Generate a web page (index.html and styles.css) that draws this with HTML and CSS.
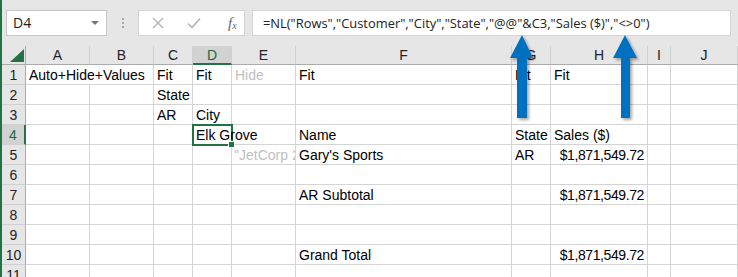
FILE: index.html
```html
<!DOCTYPE html>
<html lang="en">
<head>
  <meta charset="UTF-8">
  <title>NL formula</title>
  <link rel="stylesheet" href="styles.css">
</head>
<body>
  <div class="app">
    <div class="formula-bar">
      <div class="name-box">D4<span class="caret"></span></div>
      <div class="grip"><i></i><i></i><i></i></div>
      <div class="fx-buttons">
        <svg class="btn-icon" width="12" height="12" viewBox="0 0 12 12"><path d="M1 1 L11 11 M11 1 L1 11" stroke="#b4b4b4" stroke-width="1.4" fill="none"/></svg>
        <svg class="btn-icon" width="14" height="12" viewBox="0 0 14 12"><path d="M1 6.5 L5 10.5 L13 1.5" stroke="#b4b4b4" stroke-width="1.6" fill="none"/></svg>
        <span class="fx">f<sub>x</sub></span>
      </div>
      <div class="formula">=NL("Rows","Customer","City","State","@@"&amp;C3,"Sales ($)","&lt;&gt;0")</div>
    </div>

    <div class="sheet">
      <!-- header row -->
      <div class="corner"><span class="tri"></span></div>
      <div class="col-head">A</div>
      <div class="col-head">B</div>
      <div class="col-head">C</div>
      <div class="col-head active">D</div>
      <div class="col-head">E</div>
      <div class="col-head">F</div>
      <div class="col-head">G</div>
      <div class="col-head">H</div>
      <div class="col-head">I</div>
      <div class="col-head">J</div>

      <!-- row 1 -->
      <div class="row-head">1</div>
      <div class="cell no-line"><span class="spill">Auto+Hide+Values</span></div>
      <div class="cell"></div>
      <div class="cell">Fit</div>
      <div class="cell">Fit</div>
      <div class="cell muted">Hide</div>
      <div class="cell">Fit</div>
      <div class="cell">Fit</div>
      <div class="cell">Fit</div>
      <div class="cell"></div>
      <div class="cell"></div>

      <!-- row 2 -->
      <div class="row-head">2</div>
      <div class="cell"></div>
      <div class="cell"></div>
      <div class="cell">State</div>
      <div class="cell"></div>
      <div class="cell"></div>
      <div class="cell"></div>
      <div class="cell"></div>
      <div class="cell"></div>
      <div class="cell"></div>
      <div class="cell"></div>

      <!-- row 3 -->
      <div class="row-head">3</div>
      <div class="cell"></div>
      <div class="cell"></div>
      <div class="cell">AR</div>
      <div class="cell">City</div>
      <div class="cell"></div>
      <div class="cell"></div>
      <div class="cell"></div>
      <div class="cell"></div>
      <div class="cell"></div>
      <div class="cell"></div>

      <!-- row 4 -->
      <div class="row-head active">4</div>
      <div class="cell"></div>
      <div class="cell"></div>
      <div class="cell"></div>
      <div class="cell selected"><span class="spill">Elk Grove</span><span class="handle"></span></div>
      <div class="cell"></div>
      <div class="cell">Name</div>
      <div class="cell">State</div>
      <div class="cell">Sales ($)</div>
      <div class="cell"></div>
      <div class="cell"></div>

      <!-- row 5 -->
      <div class="row-head">5</div>
      <div class="cell"></div>
      <div class="cell"></div>
      <div class="cell"></div>
      <div class="cell"></div>
      <div class="cell muted clip">"JetCorp 2</div>
      <div class="cell">Gary's Sports</div>
      <div class="cell">AR</div>
      <div class="cell num">$1,871,549.72</div>
      <div class="cell"></div>
      <div class="cell"></div>

      <!-- row 6 -->
      <div class="row-head">6</div>
      <div class="cell"></div><div class="cell"></div><div class="cell"></div><div class="cell"></div><div class="cell"></div>
      <div class="cell"></div><div class="cell"></div><div class="cell"></div><div class="cell"></div><div class="cell"></div>

      <!-- row 7 -->
      <div class="row-head">7</div>
      <div class="cell"></div>
      <div class="cell"></div>
      <div class="cell"></div>
      <div class="cell"></div>
      <div class="cell"></div>
      <div class="cell">AR Subtotal</div>
      <div class="cell"></div>
      <div class="cell num">$1,871,549.72</div>
      <div class="cell"></div>
      <div class="cell"></div>

      <!-- row 8 -->
      <div class="row-head">8</div>
      <div class="cell"></div><div class="cell"></div><div class="cell"></div><div class="cell"></div><div class="cell"></div>
      <div class="cell"></div><div class="cell"></div><div class="cell"></div><div class="cell"></div><div class="cell"></div>

      <!-- row 9 -->
      <div class="row-head">9</div>
      <div class="cell"></div><div class="cell"></div><div class="cell"></div><div class="cell"></div><div class="cell"></div>
      <div class="cell"></div><div class="cell"></div><div class="cell"></div><div class="cell"></div><div class="cell"></div>

      <!-- row 10 -->
      <div class="row-head">10</div>
      <div class="cell"></div>
      <div class="cell"></div>
      <div class="cell"></div>
      <div class="cell"></div>
      <div class="cell"></div>
      <div class="cell">Grand Total</div>
      <div class="cell"></div>
      <div class="cell num">$1,871,549.72</div>
      <div class="cell"></div>
      <div class="cell"></div>

      <!-- row 11 -->
      <div class="row-head">11</div>
      <div class="cell"></div><div class="cell"></div><div class="cell"></div><div class="cell"></div><div class="cell"></div>
      <div class="cell"></div><div class="cell"></div><div class="cell"></div><div class="cell"></div><div class="cell"></div>
    </div>

    <!-- callout arrows pointing at the formula -->
    <svg class="arrows" width="738" height="277" viewBox="0 0 738 277">
      <defs>
        <filter id="shadow" x="-50%" y="-20%" width="200%" height="150%">
          <feDropShadow dx="2" dy="2" stdDeviation="1.5" flood-color="#000" flood-opacity="0.35"/>
        </filter>
      </defs>
      <g fill="#0070c0" filter="url(#shadow)">
        <polygon points="522,35 533,58 527,58 527,118 517,118 517,58 510,58"/>
        <polygon points="625,35 637,58 630,58 630,118 621,118 621,58 613,58"/>
      </g>
    </svg>
  </div>
</body>
</html>
```

FILE: styles.css
```css
body {
  margin: 0;
  padding: 0;
  background-color: #ffffff;
  font-family: "Liberation Sans", Arial, sans-serif;
}

.app {
  position: relative;
  width: 736px;
  height: 277px;
  overflow: hidden;
  border-left: 2px solid #217346;
}

/* formula bar */
.formula-bar {
  height: 46px;
  background-color: #e6e6e6;
  display: flex;
  align-items: flex-start;
  padding-top: 10px;
  box-sizing: border-box;
}

.name-box {
  position: relative;
  margin-left: 4px;
  width: 101px;
  height: 26px;
  box-sizing: border-box;
  background-color: white;
  border: 1px solid #c6c6c6;
  font-family: "Open Sans", sans-serif;
  font-size: 14px;
  line-height: 24px;
  padding-left: 6px;
  color: #222;
}

.caret {
  position: absolute;
  right: 7px;
  top: 10px;
  border-left: 4px solid transparent;
  border-right: 4px solid transparent;
  border-top: 4px solid #777;
}

.grip {
  width: 31px;
  height: 26px;
  display: flex;
  flex-direction: column;
  align-items: center;
  justify-content: center;
  gap: 2px;
}

.grip i {
  display: block;
  width: 2px;
  height: 2px;
  background-color: #a8a8a8;
}

.fx-buttons {
  width: 107px;
  height: 26px;
  box-sizing: border-box;
  background-color: white;
  border: 1px solid #d4d4d4;
  display: flex;
  align-items: center;
  padding-left: 13px;
  gap: 23px;
}

.fx {
  font-family: "Liberation Serif", serif;
  font-style: italic;
  font-size: 15px;
  color: #666;
  margin-left: 4px;
}

.fx sub {
  font-size: 10px;
  vertical-align: 0;
  position: relative;
  top: 1px;
}

.formula {
  margin-left: 7px;
  width: 479px;
  height: 26px;
  box-sizing: border-box;
  background-color: white;
  border: 1px solid #d4d4d4;
  font-family: "Open Sans", sans-serif;
  font-size: 12.9px;
  line-height: 24px;
  padding-left: 10px;
  color: #222;
  white-space: nowrap;
}

/* grid */
.sheet {
  display: grid;
  grid-template-columns: 24px 64px 64px 39px 39px 64px 216px 39px 97px 23px 67px;
  grid-template-rows: 19px repeat(11, 20px);
  font-size: 14px;
  color: #000;
}

.corner,
.col-head,
.row-head {
  background-color: #e6e6e6;
  box-sizing: border-box;
  color: #222;
}

.corner {
  position: relative;
  border-right: 1px solid #ababab;
  border-bottom: 1px solid #ababab;
}

.corner .tri {
  position: absolute;
  right: 1px;
  bottom: 2px;
  width: 0;
  height: 0;
  border-left: 14px solid transparent;
  border-bottom: 13px solid #217346;
}

.col-head {
  text-align: center;
  line-height: 18px;
  border-right: 1px solid #d0d0d0;
  border-bottom: 1px solid #ababab;
}

.col-head.active {
  background-color: #d2d2d2;
  color: #1d6a3f;
  border-bottom: 2px solid #217346;
}

.row-head {
  text-align: center;
  line-height: 20px;
  border-right: 1px solid #ababab;
  border-bottom: 1px solid #d0d0d0;
}

.row-head.active {
  background-color: #d2d2d2;
  color: #1d6a3f;
  border-right: 2px solid #217346;
}

.cell {
  position: relative;
  box-sizing: border-box;
  border-right: 1px solid #d4d4d4;
  border-bottom: 1px solid #d4d4d4;
  padding: 0 3px;
  line-height: 21px;
  white-space: nowrap;
}

.cell.no-line {
  border-right-color: transparent;
}

.spill {
  position: relative;
  z-index: 1;
}

.cell.muted {
  color: #c0c0c0;
}

.cell.clip {
  overflow: hidden;
  padding-left: 2px;
}

.cell.num {
  text-align: right;
  letter-spacing: -0.4px;
}

.cell.selected {
  outline: 2px solid #217346;
  outline-offset: -1px;
  z-index: 2;
}

.handle {
  position: absolute;
  right: -4px;
  bottom: -4px;
  width: 5px;
  height: 5px;
  background-color: #217346;
  border: 1px solid white;
}

.arrows {
  position: absolute;
  left: -2px;
  top: 0;
  pointer-events: none;
}
```
